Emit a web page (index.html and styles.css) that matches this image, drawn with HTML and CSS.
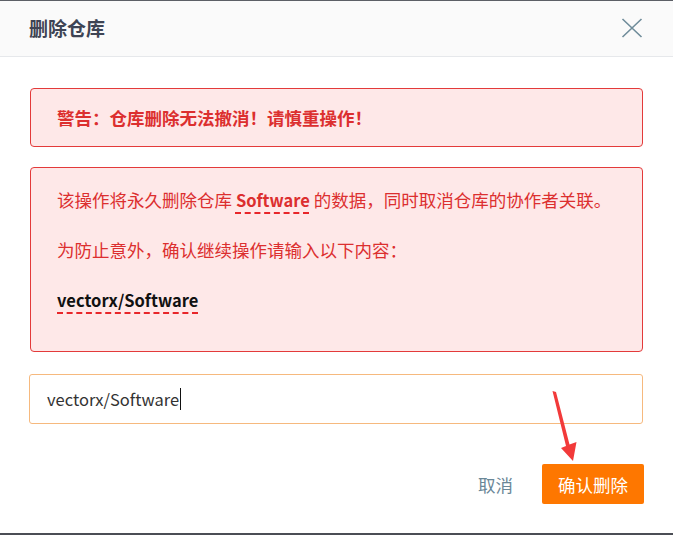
FILE: index.html
```html
<!DOCTYPE html>
<html lang="zh-CN">
<head>
<meta charset="utf-8">
<title>删除仓库</title>
<link rel="stylesheet" href="styles.css">
</head>
<body>
<div class="dialog">
  <header class="dialog-header">
    <h1 class="dialog-title">删除仓库</h1>
    <button class="close-btn" aria-label="关闭">
      <svg width="22" height="20" viewBox="0 0 22 20"><path d="M1.5 1 L20.5 19 M20.5 1 L1.5 19" stroke="#6f8c9a" stroke-width="1.6" fill="none"/></svg>
    </button>
  </header>
  <main class="dialog-body">
    <div class="alert alert-warning">警告：仓库删除无法撤消！请慎重操作！</div>
    <div class="alert alert-info">
      <p class="alert-line">该操作将永久删除仓库 <span class="mark latin">Software</span> 的数据，同时取消仓库的协作者关联。</p>
      <p class="alert-line">为防止意外，确认继续操作请输入以下内容：</p>
      <p class="alert-line"><span class="mark mark-dark latin">vectorx/Software</span></p>
    </div>
    <div class="input-box"><span class="input-text latin">vectorx/Software</span><span class="caret"></span></div>
    <div class="actions">
      <button class="btn-cancel">取消</button>
      <button class="btn-confirm">确认删除</button>
    </div>
  </main>
  <svg class="arrow" width="673" height="535" viewBox="0 0 673 535">
    <polygon points="552.5,391 556,392 569.5,444.5 576.5,442 573,461 561,448 566,446" fill="#f23a3a"/>
  </svg>
</div>
</body>
</html>
```

FILE: styles.css
```css
* { box-sizing: border-box; }
html, body { margin: 0; padding: 0; background: #ffffff; }
body {
  font-family: "Noto Sans CJK SC", "Noto Sans", sans-serif;
}
.dialog {
  position: relative;
  width: 673px;
  height: 535px;
  border-top: 1px solid #5c5f66;
  border-bottom: 2px solid #4b4e55;
  display: flex;
  flex-direction: column;
}
.dialog-header {
  height: 56px;
  background: #fafafa;
  border-bottom: 1px solid #e6e8eb;
  display: flex;
  align-items: center;
  justify-content: space-between;
  padding: 0 30px 0 29px;
}
.dialog-title {
  margin: 0;
  font-size: 19px;
  font-weight: 700;
  color: #3e4454;
  line-height: 24px;
  padding-bottom: 2px;
}
.close-btn {
  border: 0;
  background: none;
  padding: 0;
  width: 22px;
  height: 20px;
  display: flex;
  margin-top: -1px;
}
.dialog-body {
  padding: 31px 30px 0 30px;
  display: flex;
  flex-direction: column;
}
.alert {
  border: 1px solid #e33a3a;
  background: #fee8e8;
  border-radius: 4px;
  color: #dc2f2f;
  font-size: 17.5px;
  padding: 0 26px;
}
.alert-warning {
  font-weight: 700;
  line-height: 26px;
  padding-top: 16px;
  padding-bottom: 15px;
}
.alert-info {
  margin-top: 20px;
  padding-top: 19px;
  padding-bottom: 14px;
}
.alert-line {
  margin: 0 0 24px 0;
  line-height: 26px;
}
.latin { font-size: 16.5px; }
.mark {
  font-weight: 700;
  text-decoration: underline dashed #e8262a;
  text-decoration-thickness: 2px;
  text-underline-offset: 5px;
}
.mark-dark { color: #111111; }
.input-box {
  margin-top: 22px;
  height: 50px;
  border: 1px solid #f6b97e;
  border-radius: 3px;
  padding: 0 17px;
  display: flex;
  align-items: center;
  font-size: 17.5px;
  color: #333333;
  margin-left: -1px;
}
.caret {
  display: inline-block;
  width: 1px;
  height: 22px;
  background: #111;
  margin-left: 1px;
}
.actions {
  margin-top: 40px;
  display: flex;
  justify-content: flex-end;
  align-items: center;
  gap: 29px;
}
.btn-cancel {
  border: 0;
  background: none;
  font-family: inherit;
  font-size: 17.5px;
  color: #6a8797;
  padding: 0;
}
.btn-confirm {
  border: 0;
  width: 102px;
  height: 40px;
  background: #fe7700;
  border-radius: 2px;
  color: #ffffff;
  font-family: inherit;
  font-size: 17.5px;
  padding: 0;
  margin-right: -1px;
}
.arrow {
  position: absolute;
  left: 0;
  top: -1px;
  pointer-events: none;
}
```
